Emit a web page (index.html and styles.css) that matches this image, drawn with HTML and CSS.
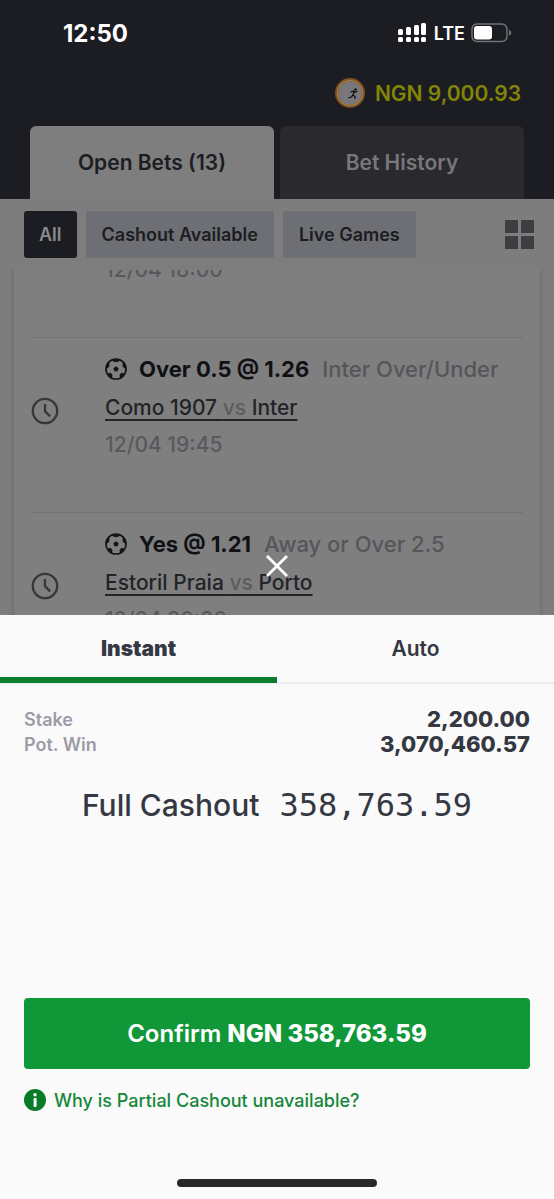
FILE: index.html
```html
<!DOCTYPE html>
<html lang="en">
<head>
<meta charset="utf-8">
<meta name="viewport" content="width=device-width, initial-scale=1">
<title>Cashout</title>
<link rel="stylesheet" href="styles.css">
</head>
<body>
<svg class="defs" aria-hidden="true">
  <symbol id="ball" viewBox="0 0 22 22">
    <circle cx="11" cy="11" r="10" fill="none" stroke="currentColor" stroke-width="1.700"/>
    <path fill="currentColor" d="M11 8.300l2.600 1.900-1 3.100H9.400L8.400 10.200zM6.500 1.800h9l-1.800 1.700L11 4.200 8.300 3.500zM1 8.600l2.200-4.800 1.200 1.500v2.700l-1.300 2-2.100.5zM21 8.600l-2.200-4.800-1.200 1.500v2.700l1.300 2 2.100.5zM3.300 17.200l.1-2.300 2.500.2 1.600 2.200-.6 2.600zM18.700 17.200l-.1-2.300-2.500.2-1.600 2.200.6 2.600z"/>
  </symbol>
  <symbol id="clock" viewBox="0 0 28 28">
    <g fill="none" stroke="currentColor" stroke-width="2.300">
      <circle cx="14" cy="14" r="12.200"/>
      <path d="M14 7v7.200l5.200 5.200"/>
    </g>
  </symbol>
</svg>

<div class="screen">
  <div class="page">
    <header class="top">
      <div class="status">
        <time class="time">12:50</time>
        <div class="signals">
          <svg width="30" height="20" viewBox="0 0 30 20" fill="#fff" aria-hidden="true">
            <rect x="0" y="6" width="5" height="6" rx="1.500"/><rect x="8" y="4" width="5" height="8" rx="1.500"/><rect x="16" y="2" width="5" height="10" rx="1.500"/><rect x="23" y="0" width="5" height="12" rx="1.500"/>
            <rect x="0" y="14" width="5" height="5" rx="1.500"/><rect x="8" y="14" width="5" height="5" rx="1.500"/><rect x="16" y="14" width="5" height="5" rx="1.500"/><rect x="23" y="14" width="5" height="5" rx="1.500"/>
          </svg>
          <span class="network">LTE</span>
          <svg width="41" height="20" viewBox="0 0 41 20" aria-hidden="true">
            <rect x="1" y="1" width="35" height="17.500" rx="5" fill="none" stroke="#6f7276" stroke-width="1.500"/>
            <rect x="3" y="3" width="18" height="13.500" rx="3" fill="#fff"/>
            <path d="M38 7c3 .5 3 5 0 5.500z" fill="#6f7276"/>
          </svg>
        </div>
      </div>
      <div class="balance">
        <svg width="30" height="30" viewBox="0 0 30 30" aria-hidden="true">
          <circle cx="15" cy="15" r="15" fill="#7d4f20"/>
          <circle cx="15" cy="15" r="12.500" fill="none" stroke="#a07c4a" stroke-width="1.500"/>
          <circle cx="15" cy="15" r="11.500" fill="#77777d"/>
          <path d="M5 12h9M6 15h7M10 23h11" stroke="#8a7460" stroke-width=".8"/>
          <circle cx="20.500" cy="11.500" r="1.200" fill="#111"/>
          <path d="M15.500 14l3-1 1.500 1.200 2.500-1.200M19.200 13l-1.200 4 2 1.500v2.500M18 17l-1.700 2-3 1" fill="none" stroke="#111" stroke-width="1.300"/>
        </svg>
        <span>NGN 9,000.93</span>
      </div>
      <nav class="tabs">
        <button class="tab tab-on">Open Bets (13)</button>
        <button class="tab">Bet History</button>
      </nav>
    </header>

    <div class="filters">
      <button class="chip chip-on">All</button>
      <button class="chip">Cashout Available</button>
      <button class="chip">Live Games</button>
      <button class="grid-view" aria-label="Grid view"><i></i><i></i><i></i><i></i></button>
    </div>

    <main class="list">
      <div class="slip">
        <article class="bet">
          <svg class="clock" aria-hidden="true"><use href="#clock"/></svg>
          <div class="info"><p class="when when-first">12/04 18:00</p></div>
        </article>
        <article class="bet">
          <svg class="clock" aria-hidden="true"><use href="#clock"/></svg>
          <div class="info">
            <p class="pick"><svg class="ball" aria-hidden="true"><use href="#ball"/></svg><b>Over 0.5 @ 1.26</b><span>Inter Over/Under</span></p>
            <p class="match"><a href="#">Como 1907 <span>vs</span> Inter</a></p>
            <p class="when">12/04 19:45</p>
          </div>
        </article>
        <article class="bet">
          <svg class="clock" aria-hidden="true"><use href="#clock"/></svg>
          <div class="info">
            <p class="pick"><svg class="ball" aria-hidden="true"><use href="#ball"/></svg><b>Yes @ 1.21</b><span>Away or Over 2.5</span></p>
            <p class="match"><a href="#">Estoril Praia <span>vs</span> Porto</a></p>
            <p class="when">12/04 20:30</p>
          </div>
        </article>
      </div>
    </main>
    <button class="close" aria-label="Close"><svg width="22" height="22" viewBox="0 0 22 22" aria-hidden="true"><path d="M1 1l20 20M21 1L1 21" stroke="#fff" stroke-width="2.800"/></svg></button>
  </div>

  <section class="sheet">
    <nav class="modes">
      <button class="mode mode-on">Instant</button>
      <button class="mode">Auto</button>
    </nav>
    <dl class="totals">
      <div><dt>Stake</dt><dd>2,200.00</dd></div>
      <div><dt>Pot. Win</dt><dd>3,070,460.57</dd></div>
    </dl>
    <p class="cashout">Full Cashout <span>358,763.59</span></p>
    <button class="confirm">Confirm <b>NGN 358,763.59</b></button>
    <a class="why" href="#"><svg width="22" height="22" viewBox="0 0 22 22" aria-hidden="true"><circle cx="11" cy="11" r="11" fill="#0a7b29"/><rect x="9.600" y="9" width="3" height="9" rx="1" fill="#fff"/><circle cx="11" cy="5.800" r="1.700" fill="#fff"/></svg>Why is Partial Cashout unavailable?</a>
    <div class="home-bar"></div>
  </section>
</div>
</body>
</html>
```
FILE: styles.css
```css
* { box-sizing: border-box; margin: 0; padding: 0; }
body { font-family: Inter, "Liberation Sans", sans-serif; color: #353842; background: #fafafa; }
button { font: inherit; border: 0; background: none; color: inherit; cursor: pointer; }
a { color: inherit; }
.defs { position: absolute; width: 0; height: 0; }

.screen { display: flex; flex-direction: column; height: 100vh; }

/* Dimmed page behind the sheet */
.page { position: relative; flex: 1; min-height: 0; display: flex; flex-direction: column; background: #7d7d7d; overflow: hidden; }
.top { background: #1b1d22; padding: 20px 30px 0; }
.status { display: flex; justify-content: space-between; align-items: center; height: 26px; padding: 0 12px 0 33px; color: #fff; }
.time { font-size: 24px; font-weight: 700; }
.signals { display: flex; align-items: center; gap: 6px; }
.network { font-size: 18px; font-weight: 600; }
.balance { display: flex; align-items: center; justify-content: flex-end; gap: 10px; margin: 32px 3px 18px 0; height: 30px; font-size: 21px; font-weight: 600; color: #828505; }
.tabs { display: grid; grid-template-columns: 1fr 1fr; gap: 6px; }
.tab { height: 73px; border-radius: 6px 6px 0 0; background: #29292e; color: #77787b; font-size: 21px; font-weight: 600; }
.tab-on { background: #7e7e7e; color: #1b1d22; }

.filters { display: flex; align-items: center; gap: 9px; padding: 12px 20px 12px 24px; }
.chip { height: 47px; padding: 0 16px; border-radius: 3px; background: #6e6f74; color: #1b1d22; font-size: 18px; font-weight: 600; white-space: nowrap; }
.chip-on { padding: 0 15px; background: #1b1d22; color: #8a8b8d; }
.grid-view { margin-left: auto; display: grid; grid-template-columns: 13px 13px; gap: 3px; }
.grid-view i { height: 13px; background: #3e3e42; }

.list { flex: 1; min-height: 0; overflow: hidden; padding: 0 14px; }
/* The list is scrolled part-way through its first bet */
.slip { margin-top: -108px; padding: 0 17px; background: #7f7f7f; box-shadow: 0 0 4px #626262; }
.bet { display: flex; align-items: center; height: 175px; }
.bet + .bet { border-top: 1px solid #737374; }
.clock { width: 28px; height: 28px; margin-bottom: 28px; color: #36373c; }
.info { flex: 1; align-self: stretch; margin-left: 46px; padding-top: 12px; }
.pick { display: flex; align-items: center; height: 38px; font-size: 22px; white-space: nowrap; color: #55565b; font-weight: 500; }
.pick b { font-weight: 700; color: #101114; margin: 0 13px 0 12px; }
.ball { width: 22px; height: 22px; color: #131418; }
.match { line-height: 40px; font-size: 21px; font-weight: 500; color: #222328; }
.match a { text-underline-offset: 4px; text-decoration-thickness: 2px; }
.match span { color: #5b5c61; }
.when { line-height: 34px; font-size: 21px; font-weight: 500; color: #58595f; }
.when-first { padding-top: 79px; }
.close { position: absolute; left: 50%; bottom: 38px; width: 22px; height: 22px; margin-left: -11px; }
.close svg { display: block; }

/* Cashout sheet */
.sheet { display: flex; flex-direction: column; background: #fafafa; }
.modes { display: grid; grid-template-columns: 1fr 1fr; border-bottom: 2px solid #ebecef; }
.mode { height: 68px; font-size: 21px; font-weight: 600; border-bottom: 6px solid transparent; margin-bottom: -1px; padding-top: 5px; }
.mode-on { font-weight: 900; border-bottom-color: #0a7e2c; }
.totals { padding: 23px 24px 0; }
.totals div { display: flex; justify-content: space-between; line-height: 25px; }
.totals dt { font-size: 18px; font-weight: 600; color: #9b9ca7; }
.totals dd { font-size: 22px; font-weight: 800; }
.cashout { display: flex; justify-content: center; align-items: baseline; gap: 20px; margin-top: 28px; line-height: 40px; font-size: 30px; font-weight: 500; }
.cashout span { font-family: "DejaVu Sans Mono", monospace; font-size: 32px; font-weight: 400; }
.confirm { margin: 173px 24px 0; height: 71px; border-radius: 4px; background: #109737; color: #fff; font-size: 24px; font-weight: 600; }
.confirm b { font-weight: 800; }
.why { display: flex; align-items: center; gap: 8px; margin: 20px 24px 0; height: 22px; font-size: 18px; font-weight: 500; color: #14873a; text-decoration: none; }
.home-bar { align-self: center; width: 36%; height: 8px; margin: 68px 0 12px; border-radius: 4px; background: #282828; }
```
